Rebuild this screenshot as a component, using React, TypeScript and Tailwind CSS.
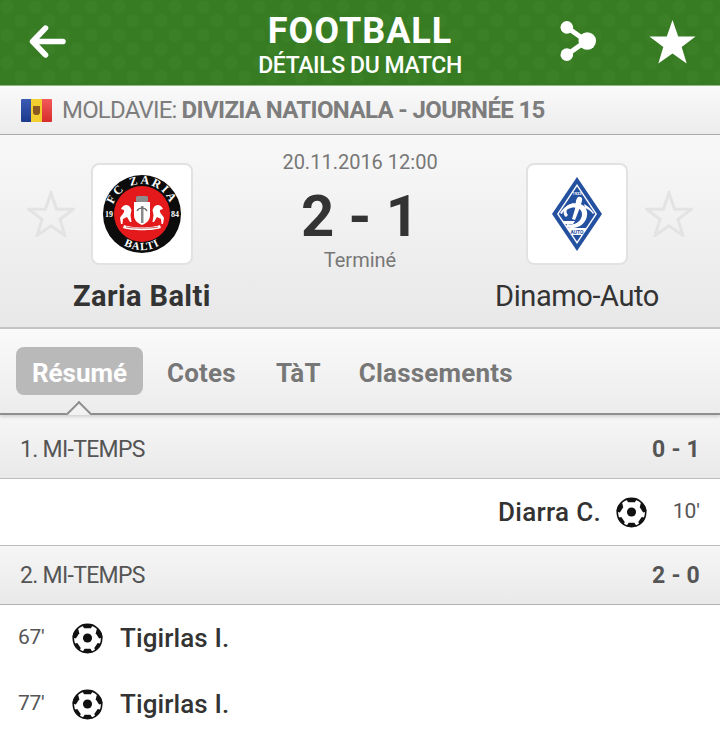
import { ReactNode } from 'react'

const font = { fontFamily: 'Roboto, "Noto Sans", sans-serif' }

function Star({ className, outline }: { className?: string; outline?: boolean }) {
  const d = 'M24 2l5.600 16.200h17L33 28.400 37.900 44.500 24 34.800 10.100 44.500 15 28.400 1.400 18.200h17z'
  return (
    <svg viewBox="0 0 48 46" className={className}>
      {outline ? (
        <path d={d} fill="none" stroke="currentColor" strokeWidth="3" strokeLinejoin="miter" />
      ) : (
        <path d={d} fill="currentColor" />
      )}
    </svg>
  )
}

function Ball() {
  return (
    <svg viewBox="0 0 32 32" className="w-[31px] h-[31px] shrink-0">
      <circle cx="16" cy="16" r="15.500" fill="#111" />
      <circle cx="16" cy="16" r="13.800" fill="#fff" />
      <circle cx="16" cy="15.500" r="4.700" fill="#111" />
      <path d="M10 1.500l2.500 3.800h7L22 1.500z" fill="#111" />
      <path d="M26 5l-1.500 5.500 3.500 5.500 3.500-1c0-4-2-7.500-5.500-10z" fill="#111" />
      <path d="M6 5l1.500 5.500L4 16l-3.500-1c0-4 2-7.500 5.500-10z" fill="#111" />
      <path d="M10.500 30.500l2.500-4h6l2.500 4z" fill="#111" />
      <path d="M30 21.500l-3.500-.8-3.500 5 1.200 3c2.500-1.500 4.800-4 5.800-7.200z" fill="#111" />
      <path d="M2 21.500l3.500-.8 3.500 5-1.200 3C5.300 27.200 3 24.700 2 21.500z" fill="#111" />
    </svg>
  )
}

function ZariaLogo() {
  return (
    <svg viewBox="0 0 78 78" className="w-[78px] h-[78px] overflow-visible">
      <circle cx="39" cy="39" r="39" fill="#0c0c0c" />
      <circle cx="39" cy="39" r="28" fill="#e3191c" />
      <defs>
        <path id="zaria-top" d="M9 39a30 30 0 0 1 60 0" />
        <path id="zaria-bottom" d="M13.500 64.500a36 36 0 0 0 51 0" />
      </defs>
      <text fontFamily="Liberation Serif" fontWeight="700" fontSize="12" fill="#fff" letterSpacing="2.200">
        <textPath href="#zaria-top" startOffset="50%" textAnchor="middle">FC ZARIA</textPath>
      </text>
      <text fontFamily="Liberation Serif" fontWeight="700" fontSize="11" fill="#fff" letterSpacing="1">
        <textPath href="#zaria-bottom" startOffset="50%" textAnchor="middle">BALTI</textPath>
      </text>
      <text x="6" y="42" fontFamily="Liberation Serif" fontWeight="700" fontSize="8" fill="#fff" textAnchor="middle">19</text>
      <text x="72" y="42" fontFamily="Liberation Serif" fontWeight="700" fontSize="8" fill="#fff" textAnchor="middle">84</text>
      {/* shield */}
      <rect x="33" y="21" width="12" height="6" rx="1.500" fill="#8d8d8d" />
      <path d="M31 27h16v13c0 5-3 8-8 10-5-2-8-5-8-10z" fill="#fff" />
      <path d="M38 31h2.500v17H38z" fill="#8a8a8a" />
      <path d="M34 36c2-4 8-4 10 0" fill="none" stroke="#666" strokeWidth="1.200" />
      {/* horses */}
      <path d="M27 32c-2-3-7-3-9 2l3 1c1 3-3 5-4 8l1 6h1.500l.5-5 4-2 3 5h1.500l-1-7 1-5z" fill="#fff" />
      <path d="M51 32c2-3 7-3 9 2l-3 1c-1 3 3 5 4 8l-1 6h-1.500l-.5-5-4-2-3 5h-1.500l1-7-1-5z" fill="#fff" />
      <path d="M21 50c6 3 30 3 36 0l1 3c-8 3-30 3-38 0z" fill="#fff" />
      <path d="M23 52c6 1.500 26 1.500 32 0" stroke="#b33" strokeWidth=".8" fill="none" />
    </svg>
  )
}

function DinamoLogo() {
  return (
    <svg viewBox="0 0 50 74" className="w-[50px] h-[74px]">
      <path d="M25 0l25 37-25 37L0 37z" fill="#2450a0" />
      <path d="M25 7l20 30-20 30L5 37z" fill="#fff" />
      <path d="M25 9.500L43.300 37 25 64.500 6.700 37z" fill="#2450a0" />
      <path d="M8 36c4-6 9-9 14-10l-2 3c-5 1-8 4-10 8zM42 36c-3-4-6-7-10-9l1 4c3 1 6 3 8 6z" fill="#fff" />
      <path d="M12 33c2-7 14-9 20-4 6 6 3 16-4 20-4 2-9 3-14 1l1-3c8 2 15-3 15-10 0-7-9-8-14-5-2 1-2 4 0 6l-2 2c-2-1-3-4-2-7z" fill="#fff" />
      <path d="M26 20c3-1 5 1 4 4s-2 6-3 9l-4 10-3-1 3-10c1-4 0-9 3-12z" fill="#fff" />
      <path d="M10 44h13l-2 3H12z" fill="#fff" />
      <path d="M15 51h20l-5 7H20z" fill="#fff" />
      <text x="25" y="56.500" fontFamily="Roboto" fontWeight="700" fontSize="5" textAnchor="middle" fill="#2450a0">AUTO</text>
      <text x="25" y="18" fontFamily="Roboto" fontWeight="700" fontSize="4" textAnchor="middle" fill="#fff">1923</text>
    </svg>
  )
}

function Flag() {
  return (
    <div className="relative flex w-[31px] h-[23px] overflow-hidden rounded-[1px]">
      <div className="w-1/3 bg-[linear-gradient(#3a5cb4,#1d3a8c)]" />
      <div className="w-1/3 bg-[#f2cf2e]" />
      <div className="w-1/3 bg-[linear-gradient(#f25a5a,#d72c2c)]" />
      <div className="absolute left-[12px] top-[7px] w-[7px] h-[9px] rounded-b-[3px] bg-[#8a5a22]" />
    </div>
  )
}

function Crest({ children }: { children: ReactNode }) {
  return (
    <div className="w-[102px] h-[102px] rounded-[8px] bg-white border-2 border-[#e2e2e2] flex items-center justify-center">
      {children}
    </div>
  )
}

function SectionHead({ label, score, className }: { label: string; score: string; className: string }) {
  return (
    <div className={`flex items-center justify-between px-[20px] bg-[linear-gradient(#f6f6f6,#e9e9e9)] text-[#555] ${className}`}>
      <span className="text-[23px] tracking-[-0.7px]">{label}</span>
      <span className="text-[23px] font-bold tracking-[0.2px]">{score}</span>
    </div>
  )
}

function Goal({ minute, player }: { minute: string; player: string }) {
  return (
    <div className="h-[66px] flex items-center">
      <span className="w-[72px] pl-[18px] text-[21px] text-[#555] tracking-[-0.3px]">{minute}</span>
      <Ball />
      <span className="ml-[17px] text-[26px] font-medium text-[#333] tracking-[0.1px]">{player}</span>
    </div>
  )
}

export default function App() {
  return (
    <div className="w-[720px] h-[732px] overflow-hidden flex flex-col bg-white" style={font}>
      {/* Header */}
      <header className="relative h-[86px] shrink-0 bg-[#377c23] bg-[radial-gradient(circle_at_7px_7px,#3b8027_6px,transparent_7px),radial-gradient(circle_at_21px_21px,#3b8027_6px,transparent_7px)] bg-[length:28px_28px] border-b border-[#8fb883] flex items-center justify-center text-white">
        <svg viewBox="0 0 36 32" className="absolute left-[29px] top-[25px] w-[37px] h-[33px]">
          <path d="M33 16H4M16 3L3.500 16 16 29" fill="none" stroke="currentColor" strokeWidth="5.500" strokeLinecap="round" strokeLinejoin="round" />
        </svg>
        <div className="flex flex-col items-center">
          <span className="text-[36px] leading-[36px] font-bold mt-[7px] tracking-[1px]">FOOTBALL</span>
          <span className="text-[23px] leading-[26px] font-medium mt-[4px] tracking-[-0.4px]">DÉTAILS DU MATCH</span>
        </div>
        <svg viewBox="0 0 38 42" className="absolute left-[560px] top-[20px] w-[37px] h-[42px]">
          <path d="M7 7l20 14L7 35" fill="none" stroke="currentColor" strokeWidth="5" />
          <circle cx="7" cy="7" r="6.500" fill="currentColor" />
          <circle cx="7" cy="35" r="6.500" fill="currentColor" />
          <circle cx="28" cy="21" r="9" fill="currentColor" />
        </svg>
        <Star className="absolute left-[648px] top-[18px] w-[49px] h-[47px]" />
      </header>

      {/* League */}
      <div className="h-[49px] shrink-0 flex items-center pl-[21px] border-b border-[#a9a9a9] bg-[linear-gradient(#fafafa,#ececec)] text-[#7d7d7d]">
        <Flag />
        <span className="ml-[10px] text-[24px] tracking-[-0.8px]">MOLDAVIE:</span>
        <span className="ml-[5px] text-[24px] font-bold tracking-[-0.63px]">DIVIZIA NATIONALA - JOURNÉE 15</span>
      </div>

      {/* Match */}
      <div className="h-[194px] shrink-0 grid grid-cols-[284px_152px_284px] pt-[28px] bg-[linear-gradient(#f8f8f8,#e8e8e8)] border-b-2 border-[#c4c4c4]">
        <div className="flex flex-col">
          <div className="flex items-center">
            <Star outline className="w-[48px] h-[46px] ml-[27px] mr-[16px] text-[#e3e3e3]" />
            <Crest><ZariaLogo /></Crest>
          </div>
          <span className="ml-[73px] mt-[10px] text-[29px] font-bold text-[#333] tracking-[0.4px]">Zaria Balti</span>
        </div>
        <div className="flex flex-col items-center -mt-[15px]">
          <span className="text-[20px] leading-[28px] text-[#777] whitespace-nowrap">20.11.2016 12:00</span>
          <span className="text-[58px] leading-[60px] font-bold text-[#333] mt-[10px] whitespace-nowrap">2 - 1</span>
          <span className="text-[20px] leading-[26px] text-[#777] mt-[1px]">Terminé</span>
        </div>
        <div className="flex flex-col">
          <div className="flex items-center">
            <div className="ml-[90px]"><Crest><DinamoLogo /></Crest></div>
            <Star outline className="w-[48px] h-[46px] ml-[17px] text-[#e3e3e3]" />
          </div>
          <span className="ml-[59px] mt-[10px] text-[29px] text-[#333] tracking-[-0.4px]">Dinamo-Auto</span>
        </div>
      </div>

      {/* Tabs */}
      <div className="relative z-10 h-[86px] shrink-0 flex items-start pt-[18px] pl-[16px] bg-[linear-gradient(#fafafa,#ececec)] border-b-2 border-[#8e8e8e] shadow-[0_2px_3px_rgba(0,0,0,0.15)] text-[#777]">
        <span className="w-[127px] h-[48px] pt-[4px] rounded-[8px] bg-[#b9b9b9] text-white text-[26px] font-bold flex items-center justify-center">Résumé</span>
        <span className="ml-[24px] h-[48px] pt-[4px] flex items-center text-[26px] font-bold tracking-[0.2px]">Cotes</span>
        <span className="ml-[40px] h-[48px] pt-[4px] flex items-center text-[26px] font-bold tracking-[0.2px]">TàT</span>
        <span className="ml-[38px] h-[48px] pt-[4px] flex items-center text-[26px] font-bold tracking-[0.2px]">Classements</span>
        <div className="absolute left-[66px] -bottom-[2px] w-[26px] h-[14px] overflow-hidden">
          <div className="w-[20px] h-[20px] mx-auto mt-[4px] rotate-45 bg-[#f2f2f2] border-l-2 border-t-2 border-[#8e8e8e]" />
        </div>
      </div>

      {/* Summary */}
      <div className="flex-1 grid grid-rows-[63px_68px_59px_66px_66px]">
        <SectionHead label="1. MI-TEMPS" score="0 - 1" className="pt-[7px]" />
        <div className="flex items-center justify-end border-y border-[#bdbdbd]">
          <span className="text-[26px] font-medium text-[#333] tracking-[0.3px]">Diarra C.</span>
          <span className="ml-[15px]"><Ball /></span>
          <span className="w-[73px] pr-[20px] text-right text-[21px] text-[#555]">10'</span>
        </div>
        <div className="border-b border-[#b0b0b0] grid">
          <SectionHead label="2. MI-TEMPS" score="2 - 0" className="pt-[2px]" />
        </div>
        <Goal minute="67'" player="Tigirlas I." />
        <Goal minute="77'" player="Tigirlas I." />
      </div>
    </div>
  )
}
